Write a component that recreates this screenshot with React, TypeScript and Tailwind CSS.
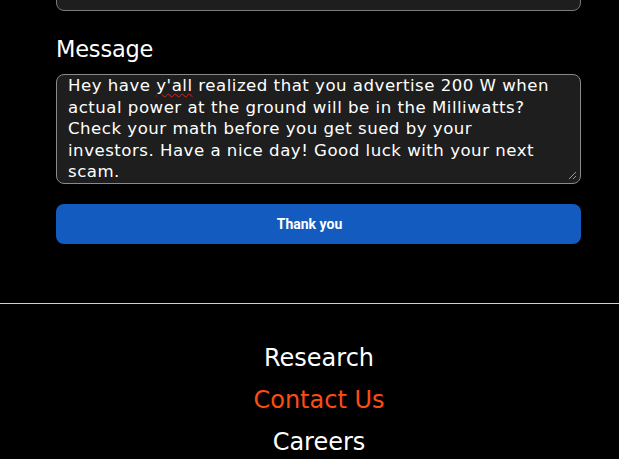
import React from 'react'

const lines = [
    ['Hey have ', "y'all", ' realized that you advertise 200 W when'],
    ['actual power at the ground will be in the Milliwatts?'],
    ['Check your math before you get sued by your'],
    ['investors. Have a nice day! Good luck with your next'],
    ['scam.'],
]

const links = [
    { label: 'Research', active: false },
    { label: 'Contact Us', active: true },
    { label: 'Careers', active: false },
]

export default function App() {
    return (
        <div className="w-[619px] h-[459px] overflow-hidden bg-black text-white font-['DejaVu_Sans',sans-serif]">
            {/* form */}
            <div className="px-[56px] pr-[38px]">
                <div className="h-[44px] -mt-[33px] rounded-[8px] border border-[#7a7a7a] bg-[#1e1e1e]" />

                <label className="block mt-[23px] text-[22.5px] leading-[30px] tracking-[-0.2px]">Message</label>

                <div className="relative mt-[10px] h-[110px] rounded-[8px] border border-[#8a8a8a] bg-[#1e1e1e] px-[11px] -pt-0 text-[16.6px] leading-[21.5px] tracking-[0.5px]">
                    {lines.map((l, i) => (
                        <div key={i} className="whitespace-nowrap">
                            {l.length > 1 ? (
                                <>
                                    {l[0]}
                                    <span className="underline decoration-wavy decoration-[#e0201c] decoration-1 underline-offset-2">{l[1]}</span>
                                    {l[2]}
                                </>
                            ) : l[0]}
                        </div>
                    ))}
                    <svg className="absolute right-[3px] bottom-[3px]" width="9" height="9" viewBox="0 0 9 9">
                        <path d="M8 1 L1 8 M8 5 L5 8" stroke="#9a9a9a" strokeWidth="1" />
                    </svg>
                </div>

                <button className="mt-[20px] w-full h-[40px] pr-[18px] rounded-[8px] bg-[#135bbf] text-white text-[14px] font-bold font-['Roboto',sans-serif]">
                    Thank you
                </button>
            </div>

            {/* footer */}
            <div className="mt-[59px] border-t border-[#d0d0d0]" />
            <nav className="flex flex-col items-center pt-[38px] pl-[19px] gap-[10px]">
                {links.map((link) => (
                    <a
                        key={link.label}
                        className={`text-[24px] leading-[32px] tracking-[0px] ${link.active ? 'text-[#ff4b14]' : 'text-white'}`}
                    >
                        {link.label}
                    </a>
                ))}
            </nav>
        </div>
    )
}
